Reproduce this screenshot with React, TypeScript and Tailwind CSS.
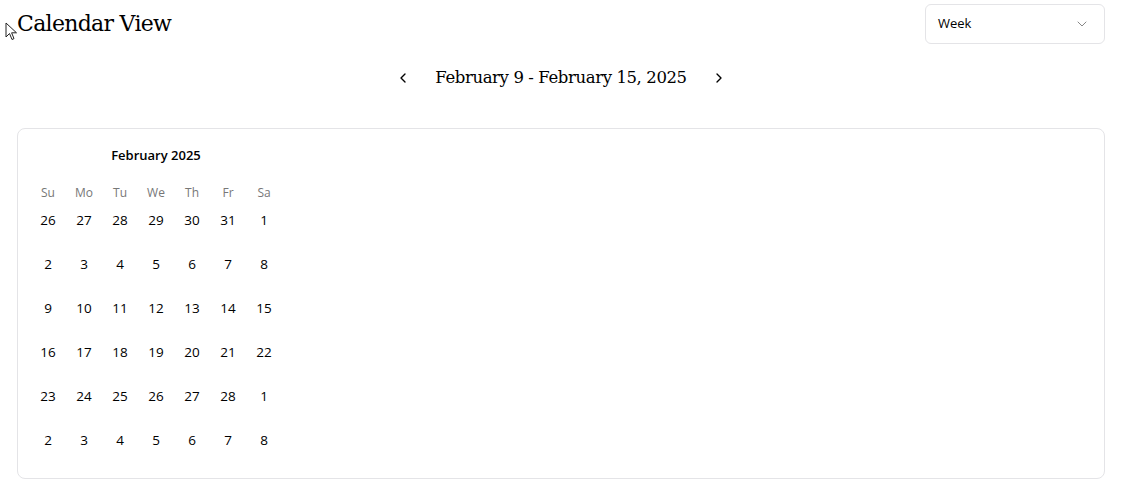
import { ChevronDown, ChevronLeft, ChevronRight } from "lucide-react";

const weekdays = ["Su", "Mo", "Tu", "We", "Th", "Fr", "Sa"];

const weeks = [
  [26, 27, 28, 29, 30, 31, 1],
  [2, 3, 4, 5, 6, 7, 8],
  [9, 10, 11, 12, 13, 14, 15],
  [16, 17, 18, 19, 20, 21, 22],
  [23, 24, 25, 26, 27, 28, 1],
  [2, 3, 4, 5, 6, 7, 8],
];

const serif = "font-['DejaVu_Serif','Liberation_Serif',serif]";
const sans = "font-['Open_Sans','Noto_Sans',sans-serif]";

export default function App() {
  return (
    <div className="relative min-h-[486px] bg-white pl-[17px] pr-[27px] pt-1 text-black">
      {/* cursor from the screenshot */}
      <svg
        className="absolute left-[5px] top-[22px]"
        width="14"
        height="20"
        viewBox="0 0 14 20"
      >
        <path
          d="M1 1 L1 15 L4.5 11.5 L7 17.5 L9 16.6 L6.6 10.8 L11.5 10.8 Z"
          fill="white"
          stroke="#222"
          strokeWidth="1"
          strokeLinejoin="round"
        />
      </svg>

      <div className="flex items-center justify-between">
        <h1 className={`${serif} text-[22px] leading-none tracking-[-0.7px]`}>
          Calendar View
        </h1>
        <button
          className={`${sans} flex h-10 w-[180px] items-center justify-between rounded-md border border-[#e4e4e7] bg-white pl-3 pr-[14px] text-[13px]`}
        >
          Week
          <ChevronDown className="h-4 w-4 text-[#888]" strokeWidth={1.5} />
        </button>
      </div>

      <div className="mt-[26px] flex items-center justify-center gap-[24px]">
        <button className="flex h-4 w-4 items-center justify-center">
          <ChevronLeft className="h-4 w-4" strokeWidth={2} />
        </button>
        <div className={`${serif} text-[16.5px] leading-none tracking-[-0.4px]`}>
          February 9 - February 15, 2025
        </div>
        <button className="flex h-4 w-4 items-center justify-center">
          <ChevronRight className="h-4 w-4" strokeWidth={2} />
        </button>
      </div>

      <div
        className={`${sans} mt-[41px] h-[351px] rounded-lg border border-[#e4e4e7] px-3 pt-[16px]`}
      >
        <div className="w-[252px]">
          <div className="flex h-[22px] items-center justify-center text-[13px] font-semibold">
            February 2025
          </div>
          <div className="mt-[17px] grid grid-cols-7">
            {weekdays.map((d) => (
              <div
                key={d}
                className="flex h-[18px] items-center justify-center text-[12px] text-[#777]"
              >
                {d}
              </div>
            ))}
          </div>
          <div className="mt-[1px] flex flex-col gap-2">
            {weeks.map((w, i) => (
              <div key={i} className="grid grid-cols-7">
                {w.map((n, j) => (
                  <div
                    key={j}
                    className="flex h-9 items-center justify-center text-[13.5px]"
                  >
                    {n}
                  </div>
                ))}
              </div>
            ))}
          </div>
        </div>
      </div>
    </div>
  );
}
